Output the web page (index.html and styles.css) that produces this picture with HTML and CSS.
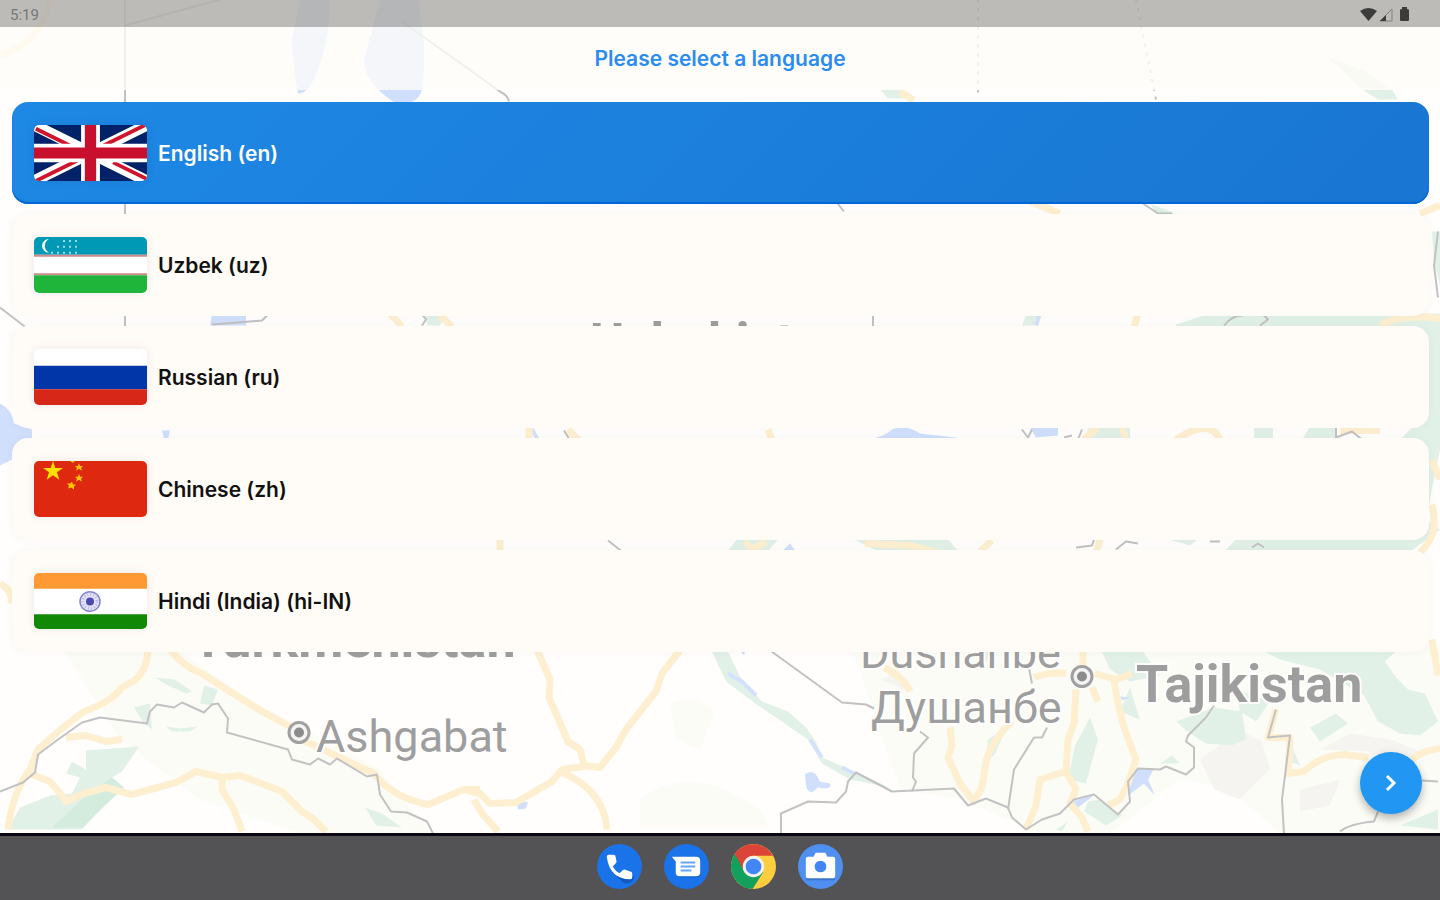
FILE: index.html
```html
<!DOCTYPE html>
<html lang="en">
  <head>
    <meta charset="UTF-8" />
    <meta name="viewport" content="width=device-width, initial-scale=1.0" />
    <title>Select language</title>
    <link rel="stylesheet" href="styles.css">
  </head>
  <body>
    <div class="screen">
      <svg class="map" viewBox="0 0 1440 834" preserveAspectRatio="xMidYMid slice" aria-hidden="true">
        <!-- terrain -->
        <g class="terrain">
          <path d="M850 645 L1440 645 V834 H1280 L1230 790 L1180 780 L1110 834 H1040 L960 800 L900 790 Z" />
          <path d="M60 645 H170 L250 700 L380 770 L430 834 H300 L200 800 L120 740 Z" />
          <path d="M640 800 Q690 760 760 810 L770 828 H640 Z" />
          <path d="M670 705 Q700 690 714 715 L700 750 L675 740 Z" />
        </g>
        <g class="hills">
          <path d="M1200 760 L1240 730 L1262 742 L1270 770 L1240 800 L1214 790 Z M1320 750 L1350 734 L1390 740 L1420 752 L1400 770 L1368 752 Z M1300 790 L1340 780 L1330 806 L1300 812 Z M1300 650 L1340 652 L1330 668 Z M880 680 L900 672 L904 690 Z" />
        </g>
        <g class="park">
          <path d="M86 751 L139 747 L122 772 L112 778 L124 790 L108 802 L82 830 H8 L20 808 L50 796 L72 794 L80 778 L66 774 L72 762 L86 770 Z" />
          <path d="M155 678 L175 680 L192 692 L186 694 L168 686 Z M204 686 L218 690 L212 706 L200 704 Z M166 727 L180 729 L198 727 L190 732 L172 732 Z M134 708 L150 704 L152 730 L144 724 Z" />
          <path d="M365 808 L382 814 L402 828 L376 826 Z" />
          <path d="M710 648 H726 L740 677 L756 695 L762 702 L788 712 L806 728 L816 742 L822 758 L850 770 L890 788 L850 780 L822 764 L808 740 L776 718 L758 706 L726 682 Z" />
          <path d="M1100 648 L1140 648 L1160 676 L1130 682 L1110 670 Z M1130 688 L1140 720 L1120 712 Z M1176 722 L1214 708 L1242 712 L1246 740 L1232 746 L1206 744 L1190 734 Z M1075 746 L1090 718 L1098 740 L1086 784 L1068 780 Z M1256 648 H1400 L1385 662 L1396 678 L1408 690 L1425 694 L1438 722 L1420 736 L1400 734 L1378 722 L1364 696 L1320 670 L1280 660 Z M1310 728 L1336 714 L1348 724 L1320 742 Z M1088 802 L1100 800 L1122 816 L1106 826 L1084 812 Z M1236 690 L1270 702 L1256 722 L1240 712 Z M1400 826 L1438 810 V830 Z M972 648 H994 L984 668 Z M988 740 L1008 726 L994 756 L986 760 Z M1056 830 L1068 822 L1062 832 Z M1160 764 L1172 756 L1180 764 Z M1290 744 L1296 756 L1300 766 L1290 762 Z" />
          <!-- east side -->
          <path d="M1176 325 L1210 314 H1440 V450 L1426 520 L1440 530 L1405 556 H1220 L1240 536 H1370 L1420 530 L1420 440 L1400 440 L1420 420 V330 H1176 Z" />
          <path d="M1432 232 H1440 V286 L1434 262 Z" />
          <path d="M1026 316 H1038 L1034 326 H1022 Z M1150 204 L1176 214 H1156 Z M1090 426 H1130 V440 H1084 Z M1254 426 H1273 V440 H1254 Z M1310 427 H1336 V440 H1302 Z" />
          <path d="M738 538 H780 L766 554 H726 Z M850 538 H946 L960 553 H880 Z M1162 538 H1200 L1190 546 Z M424 315 H446 L440 326 H428 Z M880 90 H902 L908 99 H888 Z M1362 90 H1392 L1398 100 H1378 Z M1328 58 L1362 70 L1390 90 L1360 88 Z" />
          <path d="M0 450 L10 454 L6 462 L0 466 Z" />
        </g>
        <g class="park-dark">
          <path d="M52 828 L84 798 L112 778 L124 788 L82 828 Z" />
        </g>
        <!-- water -->
        <g class="water">
          <path d="M300 0 H330 Q330 40 318 70 Q310 94 298 94 Q292 60 292 40 Z" />
          <path d="M380 0 H418 Q428 50 422 90 Q418 106 396 104 Q364 84 364 60 Q372 30 380 0 Z" />
          <path d="M0 404 Q12 410 14 424 L32 430 V450 L0 466 Z" />
          <path d="M212 315 H246 V326 H210 Z M162 431 H170 L168 440 H164 Z M866 440 Q884 438 892 430 Q904 424 920 434 L956 438 V441 Z M1030 428 H1058 V436 L1036 438 Z" />
          <path d="M805 775 Q811 770 816 775 L820 782 L830 784 Q832 788 826 789 L818 788 L812 793 Q807 792 806 786 Z" />
          <path d="M517 804 L528 802 L526 809 L518 810 Z" />
          <path d="M1128 782 L1136 769 L1154 769 L1148 780 L1155 796 L1144 784 L1128 796 Z M1072 802 L1094 796 L1078 808 Z M1120 697 L1130 698 L1122 701 Z" />
          <path d="M782 552 L790 544 L796 552 Z M738 648 H746 L744 656 Z" />
        </g>
        <g class="river">
          <path d="M728 674 L742 682 L756 696" />
          <path d="M810 740 L818 752 L822 758 M842 768 L854 774" />
          <path d="M532 430 L540 444 M1040 314 L1036 326" />
        </g>
        <!-- roads -->
        <g class="road">
          <path d="M148 648 Q148 668 136 680 L122 688 Q112 702 84 712 Q62 728 38 750 L30 770 Q12 794 8 830" />
          <path d="M168 648 Q184 668 202 674 L230 692 L262 712 L292 728 L306 742 L344 760 L374 774 Q392 798 428 805 L464 790 H480" />
          <path d="M66 738 L86 736 L106 742 L122 740" />
          <path d="M30 774 L50 782 L62 796 L66 802 L84 794 L106 788 L132 795 L176 783 L196 772 L222 778 L240 776 L282 792 L302 812 L314 820 L326 832" />
          <path d="M222 778 L222 790 L234 810 L242 832" />
          <path d="M536 648 L550 680 L549 698 L568 742 L580 750 L584 766 L600 768 L616 748 L626 730 L656 692 L662 674 L682 648" />
          <path d="M464 790 L480 794 L490 804 L516 803 L552 782 L562 770 L584 767 M560 772 Q604 790 607 830" />
          <path d="M474 800 L482 814 L498 832" />
          <path d="M884 668 Q904 678 910 692 M950 728 L952 746 L948 758 L960 784 L974 802 L982 788 L986 762 Q992 740 1012 722" />
          <path d="M1034 678 Q1050 672 1066 674 M1083 648 V668 M1095 674 L1116 680 L1132 674 M1076 690 L1074 724 L1068 740 L1066 772 L1040 780 L1036 806 L1026 830 M1092 688 L1098 702" />
          <path d="M1114 680 L1118 704 L1124 728 L1136 760 L1128 784 L1120 800 L1108 806 M1066 772 L1076 790 L1070 804 L1082 818 L1088 832" />
          <path d="M1276 710 L1268 738 L1290 738 L1288 774 L1304 772 Q1320 756 1344 755 L1368 758 M1404 770 Q1414 752 1440 749" />
          <path d="M1432 640 L1438 676" />
          <path d="M390 314 L402 327 M440 316 L452 327 M529 428 V442 M568 430 L584 446 M768 430 L774 446 M500 540 V552 M745 542 L752 550 L766 542 M865 544 L910 546 L940 554" />
          <path d="M1030 202 L1060 214 M1440 206 L1420 214 M1138 314 L1134 328 M1380 326 Q1400 314 1440 319 M1084 440 L1098 428 M1122 428 L1126 440 M1176 440 Q1210 418 1220 440 M1340 431 H1380 M980 552 L992 541 M1100 540 L1096 554 M1432 460 L1440 480 M1432 505 Q1440 535 1420 553" />
          <path d="M900 92 L914 101 M0 584 Q12 590 12 604 M0 56 Q40 44 50 0" />
        </g>
        <!-- borders -->
        <g class="border">
          <path d="M0 792 L23 783 L35 773 L38 755 L58 740 L82 723 L100 718 L147 724 L150 712 L157 705 L174 708 L182 703 L204 713 L212 705 L218 704 L228 719 L227 733 L288 750 L292 760 L310 765 L318 759 L330 765 L337 759 L367 777 L377 775 L380 795 L391 812 L407 813 L427 822 L433 834" />
          <path d="M125 0 V330 M0 308 L26 328 M873 312 V328 M125 26 L220 0" />
          <path d="M766 648 L842 703 L866 705 L874 709 M920 732 L928 738 L914 754 L913 778 L916 782 L912 792" />
          <path d="M781 834 V814 L808 802 L836 803 L846 792 L848 782 L856 773 L892 792 L954 789 L968 806 L986 799 L1008 808 L1012 818 L1026 830 L1042 820 L1060 814 L1074 800 L1094 795 L1118 815 L1130 802 L1128 782 L1138 769 L1160 770 L1166 767 L1186 775 L1194 768 L1194 748 L1186 742 L1188 736 L1206 718 L1214 706" />
          <path d="M1047 728 L1042 738 L1034 738 L1014 770 L1008 810 M1028 664 L1032 684 M1276 710 L1268 738 L1290 736 L1282 800 L1284 834 M1340 832 Q1350 824 1374 822 L1378 812 M1422 781 L1438 782" />
          <path d="M402 22 L500 92 Q508 96 509 102 M212 325 L262 321 L268 315 M422 315 L426 320 L422 326 M564 431 L572 444 M608 541 L622 552" />
          <path class="dotted" d="M978 0 V94 M1136 0 L1156 100" />
          <path d="M1438 232 L1434 266 L1438 298 M1224 326 Q1232 316 1242 316 M1264 316 L1268 320 L1260 326 M1022 430 L1028 438 L1032 430 M1064 438 L1072 436 M1078 440 L1082 430 M1336 428 V438 L1352 432 L1362 440 M1076 548 L1092 546 L1094 540 M1116 550 L1126 542 L1138 544 M1210 542 H1220 M1252 548 L1258 544 L1264 548 M836 202 L844 212 M1140 202 L1158 214 L1172 214" />
        </g>
        <g class="city">
          <circle cx="299" cy="733" r="10" /><circle class="city-dot" cx="299" cy="733" r="5" />
          <circle cx="1082" cy="677" r="10" /><circle class="city-dot" cx="1082" cy="677" r="5" />
        </g>
        <g class="country-name">
          <text x="590" y="360">Uzbekistan</text>
          <text x="192" y="657">Turkmenistan</text>
          <text x="1136" y="702">Tajikistan</text>
        </g>
        <g class="city-name">
          <text x="316" y="752">Ashgabat</text>
          <text x="860" y="668">Dushanbe</text>
          <text x="871" y="723">Душанбе</text>
        </g>
      </svg>

      <header class="header">
        <div class="status-bar">
          <span>5:19</span>
          <svg width="52" height="16" viewBox="0 0 52 16" aria-hidden="true">
            <path d="M0 4 Q8.500 -2 17 4 L8.500 14 Z" />
            <path class="signal" d="M20 14 L32 2 V14 Z" />
            <path d="M20 14 L26 8 V14 Z" />
            <path d="M40 3 Q40 2 42 2 V0 H47 V2 Q49 2 49 3 V13 Q49 14 48 14 H41 Q40 14 40 13 Z" />
          </svg>
        </div>
        <h1>Please select a language</h1>
      </header>

      <form class="languages" id="languageForm">
        <label class="language">
          <input type="radio" name="language" value="en" checked />
          <svg class="flag" viewBox="0 0 60 30" preserveAspectRatio="none" aria-hidden="true">
            <path fill="#012169" d="M0 0h60v30H0z" />
            <path stroke="#fff" stroke-width="6" d="M0 0l60 30M60 0L0 30" />
            <path stroke="#d0142c" stroke-width="2" d="M1 2l18 9M59 0L37 11M1 30l22-11M60 29L42 20" />
            <path stroke="#fff" stroke-width="10" d="M30 0v30M0 15h60" />
            <path stroke="#c8102e" stroke-width="6" d="M30 0v30M0 15h60" />
          </svg>
          <span>English (en)</span>
        </label>
        <label class="language">
          <input type="radio" name="language" value="uz" />
          <svg class="flag" viewBox="0 0 113 57" preserveAspectRatio="none" aria-hidden="true">
            <path fill="#fff" d="M0 0h113v57H0z" />
            <path fill="#0099b5" d="M0 0h113v18H0z" />
            <path fill="#d48a8a" d="M0 18h113v2H0zM0 37h113v2H0z" />
            <path fill="#1eb53a" d="M0 39h113v18H0z" />
            <path fill="#fff" d="M15 2a7 7 0 1 0 0 14a8 8 0 0 1 0-14z" />
            <path stroke="#9ad8e4" stroke-width="2" stroke-dasharray="2 4" d="M29 4h15M23 10h21M17 16h27" />
          </svg>
          <span>Uzbek (uz)</span>
        </label>
        <label class="language">
          <input type="radio" name="language" value="ru" />
          <svg class="flag" viewBox="0 0 113 57" preserveAspectRatio="none" aria-hidden="true">
            <path fill="#fff" d="M0 0h113v17H0z" />
            <path fill="#0036a7" d="M0 17h113v24H0z" />
            <path fill="#d62718" d="M0 41h113v16H0z" />
          </svg>
          <span>Russian (ru)</span>
        </label>
        <label class="language">
          <input type="radio" name="language" value="zh" />
          <svg class="flag" viewBox="0 0 113 57" preserveAspectRatio="none" aria-hidden="true">
            <path fill="#de2910" d="M0 0h113v57H0z" />
            <path fill="#ffde00" d="M19 0l2.300 7h7.700l-6 4.500 2.300 7.500-6.300-4.500-6.300 4.500 2.300-7.500-6-4.500h7.700z" />
            <path fill="#ffc800" d="M45 2l1 3h3l-2 2 1 3-3-2-3 2 1-3-2-2h3zM45 13l1 3h3l-2 2 1 3-3-2-3 2 1-3-2-2h3zM38 21l1 3h3l-2 2 0 3-3-2-3 1 1-3-2-2h3zM36 0h5l-2 2z" />
          </svg>
          <span>Chinese (zh)</span>
        </label>
        <label class="language">
          <input type="radio" name="language" value="hi-IN" />
          <svg class="flag" viewBox="0 0 113 57" preserveAspectRatio="none" aria-hidden="true">
            <path fill="#fff" d="M0 0h113v57H0z" />
            <path fill="#ff9933" d="M0 0h113v16H0z" />
            <path fill="#128807" d="M0 42h113v15H0z" />
            <circle cx="56" cy="29" r="10" fill="#e4e4f6" stroke="#8585cc" stroke-width="1.500" />
            <circle cx="56" cy="29" r="7" fill="none" stroke="#b4b4e2" stroke-width="3" stroke-dasharray="1 2" />
            <circle cx="56" cy="29" r="4" fill="#4a4aae" />
          </svg>
          <span>Hindi (India) (hi-IN)</span>
        </label>
      </form>

      <button class="next" type="submit" form="languageForm" aria-label="Next">
        <svg width="24" height="24" viewBox="0 0 24 24" aria-hidden="true">
          <path d="M8 5l7 7-7 7" />
        </svg>
      </button>
    </div>

    <nav class="dock" aria-label="Apps">
      <button type="button" aria-label="Phone">
        <svg viewBox="0 0 46 46" aria-hidden="true">
          <circle cx="23" cy="23" r="23" fill="#1a73e8" />
          <path fill="#1259bd" d="M14 28l14 12q6 1 9-3l1-4-8 2z" />
          <path fill="#fff" d="M12 11h5q2 0 2 2l1 5q0 1-1 2l-3 3q3 5 7 7l3-3q1-1 2-1l6 2q2 0 2 2v4q0 2-2 2Q13 36 10 13q0-2 2-2z" />
        </svg>
      </button>
      <button type="button" aria-label="Messages">
        <svg viewBox="0 0 46 46" aria-hidden="true">
          <circle cx="23" cy="23" r="23" fill="#1a73e8" />
          <path fill="#1259bd" d="M12 30l4 4h17q4 0 4-4z" />
          <path fill="#fff" d="M8 13h25q4 0 4 4v12q0 4-4 4H16q-4 0-4-4V18z" />
          <path fill="none" stroke="#6aa3f5" stroke-width="2" d="M17 19h15M17 23h15M17 27h11" />
        </svg>
      </button>
      <button type="button" aria-label="Chrome">
        <svg viewBox="0 0 46 46" aria-hidden="true">
          <circle cx="23" cy="23" r="23" fill="#ffcd40" />
          <path fill="#12a05c" d="M23 23L4 10A23 23 0 0 0 22 46L33 29z" />
          <path fill="#db4437" d="M4 10A23 23 0 0 1 43 12H23L13 27z" />
          <circle cx="23" cy="23" r="11" fill="#f1f1f1" />
          <circle cx="23" cy="23" r="8" fill="#4285f4" />
        </svg>
      </button>
      <button type="button" aria-label="Camera">
        <svg viewBox="0 0 46 46" aria-hidden="true">
          <circle cx="23" cy="23" r="23" fill="#4f8ff0" />
          <path fill="#3b74cf" d="M9 34h28l1 3H8z" />
          <path fill="#fff" d="M10 13h6l2-4h10l2 4h6q2 0 2 2v18q0 2-2 2H10q-2 0-2-2V15q0-2 2-2z" />
          <circle cx="23" cy="23" r="6" fill="#4285f4" />
        </svg>
      </button>
    </nav>
  </body>
</html>
```

FILE: styles.css
```css
* {
  box-sizing: border-box;
}
body {
  margin: 0;
  min-height: 100vh;
  display: flex;
  flex-direction: column;
  font-family: Inter, "Open Sans", sans-serif;
  background: #535355;
}
.screen {
  flex: 1;
  position: relative;
  overflow: hidden;
  background: #fffefd;
}

/* map background */
.map {
  position: absolute;
  top: 0;
  left: 0;
  width: 100%;
  height: 100%;
}
.terrain {
  fill: #fcfcf7;
}
.hills {
  fill: #f6f4f1;
}
.park {
  fill: #e2f1e8;
}
.park-dark {
  fill: #d4ecdd;
}
.water {
  fill: #cfdffc;
}
.river {
  fill: none;
  stroke: #d3e2fa;
  stroke-width: 4;
}
.road {
  fill: none;
  stroke: #fdefd0;
  stroke-width: 7;
  stroke-linejoin: round;
}
.border {
  fill: none;
  stroke: #c2c2c2;
  stroke-width: 2;
  stroke-linejoin: round;
}
.dotted {
  stroke-dasharray: 3 6;
}
.city {
  fill: #f4f4f4;
  stroke: #a0a0a0;
  stroke-width: 3;
}
.city-dot {
  fill: #8c8c8c;
  stroke: none;
}
.country-name,
.city-name {
  font-family: Roboto, sans-serif;
  fill: #9e9e9e;
  stroke: #fffefd;
  stroke-width: 4;
  paint-order: stroke;
}
.country-name {
  font-size: 52px;
  font-weight: 700;
}
.city-name {
  font-size: 45px;
}

/* header */
.header {
  position: relative;
  height: 90px;
  background: rgba(255, 252, 247, 0.78);
}
.status-bar {
  height: 27px;
  padding: 2px 28px 0 10px;
  display: flex;
  align-items: center;
  justify-content: space-between;
  background: rgba(0, 0, 0, 0.26);
  color: #777774;
  font-family: Roboto, sans-serif;
  font-size: 15px;
}
.status-bar svg {
  fill: #3c3c3a;
}
.status-bar .signal {
  fill: none;
  stroke: #80807c;
}
h1 {
  margin: 0;
  padding-top: 18px;
  color: #2a8cf0;
  font-size: 21px;
  font-weight: 600;
  line-height: 28px;
  text-align: center;
}

/* language list */
.languages {
  position: relative;
  display: flex;
  flex-direction: column;
  gap: 10px;
  padding: 12px 11px 0 12px;
}
.language {
  display: flex;
  align-items: center;
  gap: 11px;
  height: 102px;
  padding: 0 22px;
  border-radius: 16px;
  background: #fffcf7;
  box-shadow: 0 0 10px rgba(0, 0, 0, 0.04);
  color: #111;
  font-size: 21px;
  font-weight: 600;
  cursor: pointer;
}
.language input {
  position: absolute;
  opacity: 0;
}
.language:has(input:checked) {
  background: linear-gradient(135deg, #1e88e5, #1976d2);
  box-shadow: inset 0 -2px 1px #0066d8;
  color: #fff;
}
.flag {
  width: 113px;
  height: 56px;
  border-radius: 5px;
  box-shadow: 0 0 10px rgba(0, 0, 0, 0.08);
}

.next {
  position: absolute;
  right: 18px;
  bottom: 19px;
  width: 62px;
  height: 62px;
  padding: 0;
  display: flex;
  align-items: center;
  justify-content: center;
  border: none;
  border-radius: 50%;
  background: #2196f3;
  box-shadow: 0 4px 8px rgba(0, 0, 0, 0.3);
  cursor: pointer;
}
.next svg {
  fill: none;
  stroke: #fff;
  stroke-width: 3;
}

/* bottom dock */
.dock {
  display: flex;
  justify-content: center;
  gap: 22px;
  padding: 8px 0 11px;
  border-top: 3px solid #0a0612;
  background: #535355;
}
.dock button {
  width: 45px;
  height: 45px;
  padding: 0;
  border: none;
  background: none;
  cursor: pointer;
}
.dock svg {
  display: block;
  width: 45px;
  height: 45px;
}
```
